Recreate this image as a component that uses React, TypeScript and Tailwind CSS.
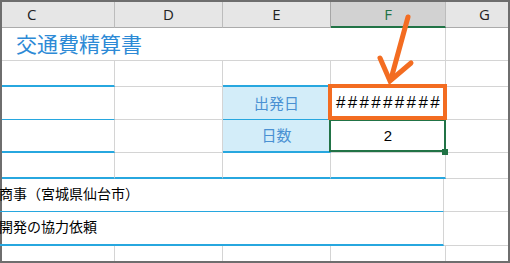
import React from "react";

// gridline + accent classes, written out so tailwind picks them up
const cell = "h-full border-r border-b border-[#d4d4d4]";
const blue2 = "border-b-2 border-b-[#27a7df]";
const blue1 = "border-b-[#27a7df]";
const label = "flex items-center justify-center bg-[#d3edf9] text-[15px] text-[#4a91d3]";

const App = () => {
  return (
    <div className="relative h-[263px] w-[510px] overflow-hidden bg-white">
      <div className="flex h-full w-full flex-col border-2 border-[#6e6e6e] font-['Noto_Sans_CJK_JP',sans-serif] text-black">
        {/* column headers */}
        <div className="flex h-[26px] shrink-0 bg-[#e6e6e6] font-['Open_Sans',sans-serif] text-[15px] text-[#222]">
          <div className="flex w-[113px] items-center border-r border-b border-r-[#bcbcbc] border-b-[#ababab] pl-[25px]">C</div>
          <div className="flex w-[108px] items-center justify-center border-r border-b border-r-[#bcbcbc] border-b-[#ababab]">D</div>
          <div className="flex w-[108px] items-center justify-center border-r border-b border-r-[#a6a6a6] border-b-[#ababab]">E</div>
          <div className="flex w-[115px] items-center justify-center border-r border-b-2 border-r-[#bcbcbc] border-b-[#217346] bg-[#d2d2d2] text-[#217346]">F</div>
          <div className="flex flex-1 items-center border-b border-b-[#ababab] pl-[33px]">G</div>
        </div>

        {/* title */}
        <div className="flex h-[33px] shrink-0">
          <div className={`${cell} w-[444px] pl-[14px] pt-[1px] text-[21px] leading-[28px] text-[#2d8ad6]`}>交通費精算書</div>
          <div className={`${cell} flex-1 border-r-0`} />
        </div>

        <div className="flex h-[26px] shrink-0">
          <div className={`${cell} w-[113px] ${blue2}`} />
          <div className={`${cell} w-[108px]`} />
          <div className={`${cell} w-[108px] ${blue2}`} />
          <div className={`${cell} w-[115px]`} />
          <div className={`${cell} flex-1 border-r-0`} />
        </div>

        <div className="flex h-[33px] shrink-0">
          <div className={`${cell} w-[113px] ${blue1}`} />
          <div className={`${cell} w-[108px]`} />
          <div className={`${cell} w-[108px] ${blue1} ${label}`}>出発日</div>
          <div className={`${cell} relative flex w-[115px] items-center justify-center pl-[2px] font-['Liberation_Sans',sans-serif] text-[17px] tracking-[2.3px]`}>
            #########
            <div className="absolute -top-[3px] -right-[2px] -bottom-[1px] -left-[3px] z-10 border-4 border-[#f36c21]" />
          </div>
          <div className={`${cell} flex-1 border-r-0`} />
        </div>

        <div className="flex h-[33px] shrink-0">
          <div className={`${cell} w-[113px] ${blue2}`} />
          <div className={`${cell} w-[108px]`} />
          <div className={`${cell} w-[108px] ${blue2} ${label}`}>日数</div>
          <div className={`${cell} relative flex w-[115px] items-center justify-center font-['Liberation_Sans',sans-serif] text-[15px]`}>
            2
            <div className="absolute -top-[1px] -right-[1px] bottom-0 -left-[2px] border-2 border-[#217346]" />
            <div className="absolute -right-[3px] -bottom-[3px] h-[6px] w-[6px] bg-[#217346]" />
          </div>
          <div className={`${cell} flex-1 border-r-0`} />
        </div>

        <div className="flex h-[26px] shrink-0">
          <div className={`${cell} w-[113px] ${blue2}`} />
          <div className={`${cell} w-[108px] ${blue2}`} />
          <div className={`${cell} w-[108px] ${blue2}`} />
          <div className={`${cell} w-[115px] ${blue2}`} />
          <div className={`${cell} flex-1 border-r-0`} />
        </div>

        <div className="flex h-[33px] shrink-0">
          <div className={`${cell} ${blue1} flex w-[444px] items-center -ml-[2px] pb-[3px] text-[14px]`}>
            <span className="-ml-[1px]">商事（宮城県仙台市）</span>
          </div>
          <div className={`${cell} flex-1 border-r-0`} />
        </div>

        <div className="flex h-[34px] shrink-0">
          <div className={`${cell} ${blue2} flex w-[444px] items-center -ml-[2px] pb-[3px] text-[14px]`}>
            <span className="-ml-[1px]">開発の協力依頼</span>
          </div>
          <div className={`${cell} flex-1 border-r-0`} />
        </div>

        <div className="flex min-h-0 flex-1">
          <div className="h-full w-[113px] border-r border-[#d4d4d4]" />
          <div className="h-full w-[108px] border-r border-[#d4d4d4]" />
          <div className="h-full w-[108px] border-r border-[#d4d4d4]" />
          <div className="h-full w-[115px] border-r border-[#d4d4d4]" />
          <div className="h-full flex-1" />
        </div>
      </div>

      {/* pointer arrow */}
      <svg className="pointer-events-none absolute top-0 left-0" width="510" height="263" viewBox="0 0 510 263">
        <path d="M408 17 L391 79" stroke="#f36c21" strokeWidth="5" strokeLinecap="round" fill="none" />
        <path d="M380 58 L390 81 L411 63" stroke="#f36c21" strokeWidth="5" strokeLinecap="round" strokeLinejoin="miter" fill="none" />
      </svg>
    </div>
  );
};

export default App;
